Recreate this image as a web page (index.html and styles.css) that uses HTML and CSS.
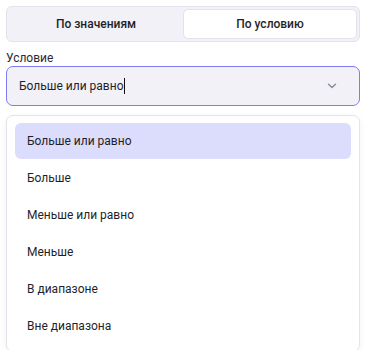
FILE: index.html
```html
<!DOCTYPE html>
<html lang="ru">
<head>
    <meta charset="UTF-8">
    <title>Условие</title>
    <link rel="stylesheet" href="styles.css">
</head>
<body>
    <div class="panel">
        <div class="tabs">
            <button class="tab">По значениям</button>
            <button class="tab active">По условию</button>
        </div>
        <div class="field">
            <label class="label">Условие</label>
            <div class="select">
                <span class="value">Больше или равно</span><span class="caret"></span>
                <svg class="chevron" width="10" height="6" viewBox="0 0 10 6">
                    <path d="M1.5 1.2 L5 4.5 L8.5 1.2" fill="none" stroke="#8a8a96" stroke-width="1.4" stroke-linecap="round" stroke-linejoin="round"/>
                </svg>
            </div>
        </div>
        <ul class="menu">
            <li class="option selected">Больше или равно</li>
            <li class="option">Больше</li>
            <li class="option">Меньше или равно</li>
            <li class="option">Меньше</li>
            <li class="option">В диапазоне</li>
            <li class="option">Вне диапазона</li>
        </ul>
    </div>
</body>
</html>
```

FILE: styles.css
```css
body {
    margin: 0;
    padding: 6px 5px 0 6px;
    font-family: 'Roboto', 'Noto Sans', sans-serif;
    font-size: 12px;
    color: #1f1f29;
    background-color: #ffffff;
    overflow: hidden;
}
.panel {
    display: flex;
    flex-direction: column;
}
.tabs {
    display: flex;
    height: 36px;
    box-sizing: border-box;
    padding: 2px;
    background-color: #f2f1f7;
    border: 1px solid #e3e2ea;
    border-radius: 6px;
}
.tab {
    flex: 1;
    border: 1px solid transparent;
    background: none;
    border-radius: 5px;
    font-family: inherit;
    font-size: 12px;
    font-weight: 500;
    color: #1f1f29;
    padding: 0;
}
.tab.active {
    background-color: #ffffff;
    border-color: #e3e2ea;
}
.field {
    display: flex;
    flex-direction: column;
    margin-top: 8px;
}
.label {
    font-size: 12px;
    color: #2a2a33;
    line-height: 16px;
}
.select {
    display: flex;
    align-items: center;
    height: 40px;
    box-sizing: border-box;
    padding: 0 12px;
    background-color: #f2f1f7;
    border: 1px solid #7c7cf0;
    border-radius: 7px;
}
.value {
    color: #1f1f29;
}
.caret {
    display: inline-block;
    width: 1px;
    height: 16px;
    background-color: #111;
    margin-left: 1px;
}
.chevron {
    margin-left: auto;
    margin-right: 10px;
}
.menu {
    list-style: none;
    margin: 9px 0 0 0;
    padding: 7px 8px;
    border: 1px solid #e4e3eb;
    border-radius: 7px;
    box-shadow: 0 2px 6px rgba(30, 30, 60, 0.06);
    display: flex;
    flex-direction: column;
    gap: 1px;
}
.option {
    height: 36px;
    display: flex;
    align-items: center;
    padding: 0 12px;
    border-radius: 6px;
}
.option.selected {
    background-color: #dcdcfc;
}
```
